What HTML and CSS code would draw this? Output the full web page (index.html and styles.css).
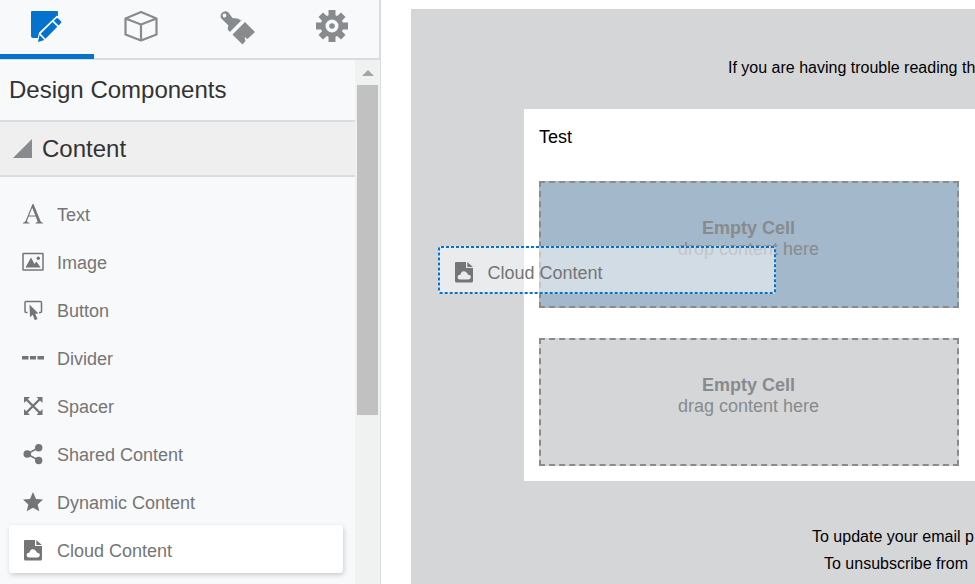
FILE: index.html
```html
<!DOCTYPE html>
<html lang="en">

<head>
    <meta charset="UTF-8">
    <meta name="viewport" content="width=device-width, initial-scale=1.0">
    <title>Email Editor</title>
    <link rel="stylesheet" href="styles.css">
</head>

<body>
    <svg class="defs" width="0" height="0">
        <symbol id="cloud-file" viewBox="0 0 20 22">
            <path fill-rule="evenodd" d="M2 1H12V7H19V20Q19 21.500 17.500 21.500H2.500Q1 21.500 1 20V2Q1 1 2 1ZM6 18.500H14Q17 18.300 16.800 15.500Q16.300 13.500 14 13.800Q12.500 10.200 9.800 10.200Q7 10.500 6.500 13.500Q3.800 13.500 3.500 16Q3.800 18.500 6 18.500Z"/>
            <path d="M13.300 1L18.800 6H13.300Z"/>
        </symbol>
    </svg>
    <div class="editor">
        <div class="sidebar">
            <div class="tabs">
                <div class="tab active">
                    <svg width="34" height="34" viewBox="0 0 34 34">
                        <path d="M3 2H28Q29 2 29 3V7L11 24L9 29H4Q2 29 2 27V3Q2 2 3 2Z"/>
                        <path class="knife" d="M9 32L11 24L28 8L33 13L16 30Z"/>
                        <path d="M9 33L10.500 26L15.500 31ZM11.700 24.800L23.500 13L28.300 17.800L16.500 29.800ZM24.800 11.700L27.500 9.300Q28.500 8.700 29.500 9.700L32 12.200Q32.900 13.200 32 14L29.500 16.500Z"/>
                    </svg>
                </div>
                <div class="tab">
                    <svg class="line" width="34" height="34" viewBox="0 0 34 34">
                        <path d="M17 3L32.500 9.500V25.500L17 31.500L1.500 25.500V9.500ZM1.500 9.500L17 15.500L32.500 9.500M17 15.500V31.500"/>
                    </svg>
                </div>
                <div class="tab">
                    <svg width="36" height="36" viewBox="0 0 36 36">
                        <path fill-rule="evenodd" d="M1.500 7A4.800 4.800 0 0 1 9.500 3.500L13.500 9L18 9.500Q20 9.500 21.500 11.500L23.800 10L10.800 23L8.800 20.500Q8.500 18 9.500 16.500L2.800 10Q1.500 8.500 1.500 7ZM5.500 4.600A1.900 1.900 0 1 0 5.500 8.400A1.900 1.900 0 1 0 5.500 4.600Z"/>
                        <path d="M26 13L36 23L28.500 30L25.500 28L26.500 32L23.500 35.500L13.500 25.500Z"/>
                    </svg>
                </div>
                <div class="tab">
                    <svg width="34" height="34" viewBox="-17 -17 34 34">
                        <path fill-rule="evenodd" d="M-3.500 -16H3.500V-10.700L5.200 -10L9 -13.500L13.500 -9L10 -5.200L10.800 -3.500H16V3.500H10.800L10 5.200L13.500 9L9 13.500L5.200 10L3.500 10.700V16H-3.500V10.700L-5.200 10L-9 13.500L-13.500 9L-10 5.200L-10.800 3.500H-16V-3.500H-10.800L-10 -5.200L-13.500 -9L-9 -13.500L-5.200 -10L-3.500 -10.700ZM0 -6.500A6.500 6.500 0 1 0 0 6.500A6.500 6.500 0 1 0 0 -6.500Z"/>
                        <circle r="2.800"/>
                    </svg>
                </div>
            </div>
            <div class="panel">
                <div class="components">
                    <h1>Design Components</h1>
                    <h2>
                        <svg width="20" height="20" viewBox="0 0 20 20"><path d="M19 0V19H0Z"/></svg>
                        Content
                    </h2>
                    <ul>
                        <li>
                            <svg width="22" height="22" viewBox="0 0 22 22">
                                <path fill-rule="evenodd" d="M10.500 1H11.500L18.500 18Q19 19.500 21 19.700V20.500H13.500V19.700Q16 19.600 15.400 18L13.700 13.500H6.700L5.200 17.500Q4.600 19.500 7.500 19.700V20.500H1V19.700Q3 19.500 3.800 17.500ZM10.200 4.800L7.100 12.500H13.300Z"/>
                            </svg>
                            Text
                        </li>
                        <li>
                            <svg width="22" height="22" viewBox="0 0 22 22">
                                <rect class="stroke" x="1" y="2.500" width="20" height="16.500" rx=".5"/>
                                <path d="M3.500 16.500L9 6.500L12.500 13L14.300 10.500L18.700 16.500Z"/>
                                <circle cx="16.300" cy="7.300" r="1.700"/>
                            </svg>
                            Image
                        </li>
                        <li>
                            <svg width="22" height="22" viewBox="0 0 22 22">
                                <path class="stroke" d="M5.500 13.500H4Q3 13.500 3 12.500V3.500Q3 2.500 4 2.500H18.500Q19.500 2.500 19.500 3.500V12.500Q19.500 13.500 18.500 13.500H17"/>
                                <path d="M7.500 5.500L16.500 14.500L13.200 14.800L15.500 20L12.800 21.200L10.700 15.800L8 18.200Z"/>
                            </svg>
                            Button
                        </li>
                        <li>
                            <svg width="22" height="22" viewBox="0 0 22 22">
                                <path d="M0 9H6.500V12.500H0ZM8 9H14V12.500H8ZM15.500 9H22V12.500H15.500Z"/>
                            </svg>
                            Divider
                        </li>
                        <li>
                            <svg width="22" height="22" viewBox="0 0 22 22">
                                <path class="cross" d="M4 4L18 18M18 4L4 18"/>
                                <path d="M2 2H8L2 8ZM14.500 2H20.500V8ZM2 14V20H8ZM20.500 14V20H14.500Z"/>
                            </svg>
                            Spacer
                        </li>
                        <li>
                            <svg width="22" height="22" viewBox="0 0 22 22">
                                <path class="stroke" d="M17 4.500L5 11L17 17.500"/>
                                <circle cx="5.300" cy="11" r="3.800"/>
                                <circle cx="16.700" cy="4.700" r="3.700"/>
                                <circle cx="16.700" cy="17.500" r="3.700"/>
                            </svg>
                            Shared Content
                        </li>
                        <li>
                            <svg width="22" height="22" viewBox="0 0 22 22">
                                <path d="M11 1L14 7.900L21 8.500L15.700 13.400L17.300 20.300L11 16.700L4.700 20.300L6.300 13.400L1 8.500L8 7.900Z"/>
                            </svg>
                            Dynamic Content
                        </li>
                        <li class="raised">
                            <svg width="20" height="22"><use href="#cloud-file"/></svg>
                            Cloud Content
                        </li>
                    </ul>
                </div>
                <div class="scrollbar">
                    <div class="arrow"></div>
                    <div class="thumb"></div>
                </div>
            </div>
        </div>
        <div class="canvas">
            <p class="preheader">If you are having trouble reading th</p>
            <div class="email">
                <p>Test</p>
                <div class="cell over"><b>Empty Cell</b>drop content here</div>
                <div class="cell"><b>Empty Cell</b>drag content here</div>
            </div>
            <div class="footer">
                <p>To update your email p</p>
                <p class="unsubscribe">To unsubscribe from</p>
            </div>
        </div>
    </div>
    <div class="dragging">
        <svg class="outline" width="338" height="48"><rect x="1" y="1" width="336" height="46" rx="2"/></svg>
        <svg width="20" height="22"><use href="#cloud-file"/></svg>
        Cloud Content
    </div>
</body>

</html>
```

FILE: styles.css
```css
* {
    box-sizing: border-box;
}

body {
    margin: 0;
    font-family: "Liberation Sans", Arial, sans-serif;
    font-size: 18px;
    color: #000;
    background-color: #fff;
    overflow: hidden;
}

h1, h2, p, ul {
    margin: 0;
    padding: 0;
    font-weight: normal;
}

svg {
    display: block;
    flex: none;
    fill: currentColor;
}

.defs {
    position: absolute;
}

.editor {
    display: flex;
    height: 584px;
    overflow: hidden;
}

.sidebar {
    display: flex;
    flex-direction: column;
    flex: none;
    width: 381px;
    background-color: #f8f9fb;
    border-right: 1px solid #d6dee4;
}

.tabs {
    display: flex;
    flex: none;
    height: 60px;
    border-bottom: 2px solid #d6dee4;
    border-right: 1px solid #d6dee4;
    color: #878b8e;
}

.tab {
    display: flex;
    flex: none;
    justify-content: center;
    width: 94px;
    height: 59px;
    margin-right: 1.3px;
    padding: 9px 2px 0 0;
}

.tab.active {
    color: #0572ce;
    border-bottom: 5px solid #0572ce;
}

.knife {
    fill: #f8f9fb;
    stroke: #f8f9fb;
    stroke-width: 2;
}

.line {
    fill: none;
    stroke: currentColor;
    stroke-width: 2.2;
    stroke-linejoin: round;
}

.panel {
    display: flex;
    flex: 1;
    min-height: 0;
}

.components {
    width: 355px;
    overflow: hidden;
}

h1 {
    height: 62px;
    padding-left: 9px;
    font-size: 24px;
    line-height: 60px;
    color: #333;
    border-bottom: 2px solid #d6dee4;
}

h2 {
    display: flex;
    align-items: center;
    gap: 9px;
    height: 55px;
    padding-left: 13px;
    font-size: 24px;
    color: #333;
    background-color: #efefef;
    border-bottom: 2px solid #d6dee4;
}

h2 svg {
    color: #878b8e;
}

ul {
    padding: 12px 12px 0 9px;
    list-style: none;
}

li, .dragging {
    display: flex;
    align-items: center;
    color: #757575;
}

li {
    height: 48px;
    padding: 5px 0 0 13px;
}

li svg {
    width: 22px;
    margin: 0 13px 4px 0;
}

.stroke, .cross {
    fill: none;
    stroke: currentColor;
    stroke-width: 1.5;
}

.cross {
    stroke-width: 2.4;
}

.raised {
    background-color: #fff;
    border-radius: 3px;
    box-shadow: 1px 2px 5px rgba(0, 0, 0, 0.18);
}

.scrollbar {
    display: flex;
    flex-direction: column;
    align-items: center;
    width: 25px;
    background-color: #f0f2f1;
}

.arrow {
    margin: 10px 0 9px;
    border: 6px solid transparent;
    border-top: 0;
    border-bottom-color: #a3a3a3;
}

.thumb {
    width: 21px;
    height: 330px;
    background-color: #c1c1c1;
}

.canvas {
    flex: none;
    width: 676px;
    height: 575px;
    margin: 9px 0 0 30px;
    background-color: #d5d6d8;
    white-space: nowrap;
}

.preheader {
    height: 100px;
    padding-left: 317px;
    font-size: 16px;
    line-height: 117px;
}

.email {
    height: 372px;
    margin-left: 113px;
    padding: 18px 15px 0;
    background-color: #fff;
}

.email p {
    height: 54px;
    line-height: 21px;
}

.cell {
    width: 420px;
    height: 127px;
    margin-bottom: 30px;
    padding: 35px 1px 0 0;
    line-height: 21px;
    text-align: center;
    color: #878b8e;
    background-color: #d5d6d8;
    border: 2px dashed #8a8b8d;
}

.cell + .cell {
    height: 128px;
}

.cell.over {
    background-color: #a3b8ca;
}

.cell b {
    display: block;
}

.footer {
    padding: 42px 0 0 401px;
    font-size: 16px;
    line-height: 27px;
}

.unsubscribe {
    padding-left: 12px;
}

.dragging {
    position: absolute;
    top: 246px;
    left: 438px;
    width: 338px;
    height: 48px;
    padding: 6px 0 0 15.5px;
    gap: 14px;
    background-color: rgba(255, 255, 255, 0.5);
    border-radius: 3px;
}

.dragging svg {
    margin-bottom: 3px;
}

.dragging .outline {
    position: absolute;
    top: 0;
    left: 0;
    margin: 0;
    fill: none;
    stroke: #0572ce;
    stroke-width: 2;
    stroke-dasharray: 3 2;
}
```
